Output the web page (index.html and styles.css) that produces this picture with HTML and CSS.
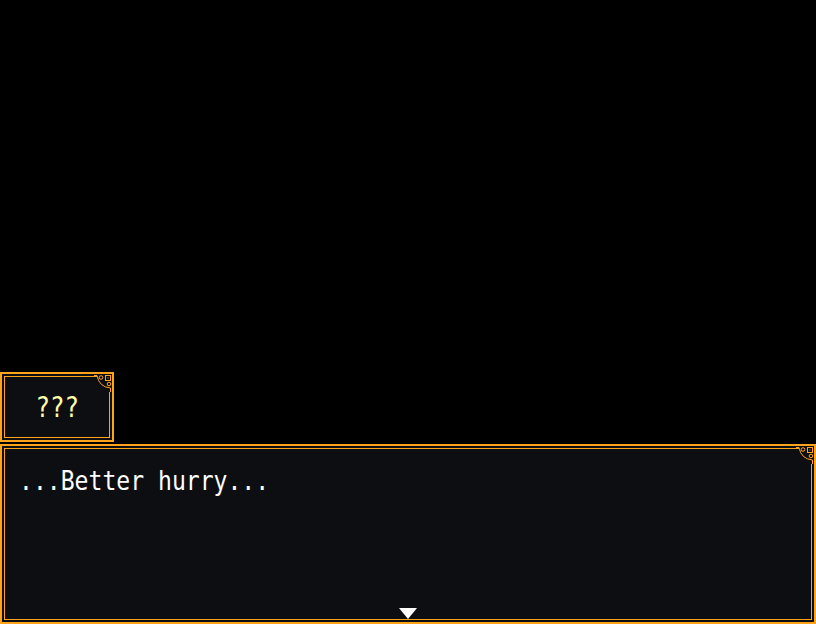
FILE: index.html
```
<!DOCTYPE html>
<html>
<head>
<meta charset="utf-8">
<link rel="stylesheet" href="styles.css">
</head>
<body>
<div class="stage">
  <div class="win name-win">
    <div class="win-inner name-inner">
      <span class="name-text">???</span>
    </div>
    <svg class="orn" width="18" height="18" viewBox="0 0 18 18">
      <rect x="3" y="0" width="15" height="18" fill="#0d0e12"/>
      <path d="M0 1.5 H3 Q5 13 16.5 14 V18" fill="none" stroke="#ffa31a" stroke-width="1"/>
      <circle cx="7" cy="3.5" r="1.8" fill="none" stroke="#ffa31a" stroke-width="1"/>
      <rect x="11.5" y="1.5" width="5" height="5" fill="none" stroke="#ffa31a" stroke-width="1"/>
      <rect x="13.5" y="3.5" width="1" height="1" fill="#ffa31a"/>
      <circle cx="15" cy="10" r="1.8" fill="none" stroke="#ffa31a" stroke-width="1"/>
    </svg>
  </div>
  <div class="win msg-win">
    <div class="win-inner msg-inner">
      <p class="msg-text">...Better hurry...</p>
    </div>
    <svg class="orn" width="18" height="18" viewBox="0 0 18 18">
      <rect x="3" y="0" width="15" height="18" fill="#0d0e12"/>
      <path d="M0 1.5 H3 Q5 13 16.5 14 V18" fill="none" stroke="#ffa31a" stroke-width="1"/>
      <circle cx="7" cy="3.5" r="1.8" fill="none" stroke="#ffa31a" stroke-width="1"/>
      <rect x="11.5" y="1.5" width="5" height="5" fill="none" stroke="#ffa31a" stroke-width="1"/>
      <rect x="13.5" y="3.5" width="1" height="1" fill="#ffa31a"/>
      <circle cx="15" cy="10" r="1.8" fill="none" stroke="#ffa31a" stroke-width="1"/>
    </svg>
    <svg class="pause" width="18" height="11" viewBox="0 0 18 11">
      <polygon points="0,0 18,0 9,11" fill="#ffffff"/>
    </svg>
  </div>
</div>
</body>
</html>
```
FILE: styles.css
```
html, body {
  margin: 0;
  padding: 0;
  background: #000;
}
.stage {
  width: 816px;
  height: 624px;
  display: flex;
  flex-direction: column;
  justify-content: flex-end;
  overflow: hidden;
}
.win {
  position: relative;
  box-sizing: border-box;
  border: 2px solid #ffa31a;
  padding: 2px;
  background: #0d0e12;
  display: flex;
}
.win-inner {
  flex: 1;
  box-sizing: border-box;
  border: 1px solid #ffa31a;
}
.name-win {
  width: 114px;
  height: 70px;
}
.name-inner {
  display: flex;
  align-items: center;
  justify-content: center;
}
.name-text {
  font-family: "DejaVu Sans Mono", monospace;
  font-size: 28px;
  line-height: 30px;
  color: #ffffa8;
  display: inline-block;
  transform: scaleX(0.86);
  padding-top: 1px;
}
.msg-win {
  width: 816px;
  height: 180px;
  margin-top: 2px;
}
.msg-inner {
  padding: 16px 0 0 14px;
}
.msg-text {
  margin: 0;
  font-family: "DejaVu Sans Mono", monospace;
  font-size: 27px;
  line-height: 32px;
  color: #ffffff;
  display: inline-block;
  transform: scaleX(0.855);
  transform-origin: left top;
  white-space: pre;
}
.orn {
  position: absolute;
  top: 0;
  right: 0;
}
.pause {
  position: absolute;
  left: 50%;
  bottom: 3px;
  transform: translateX(-50%);
}
```
